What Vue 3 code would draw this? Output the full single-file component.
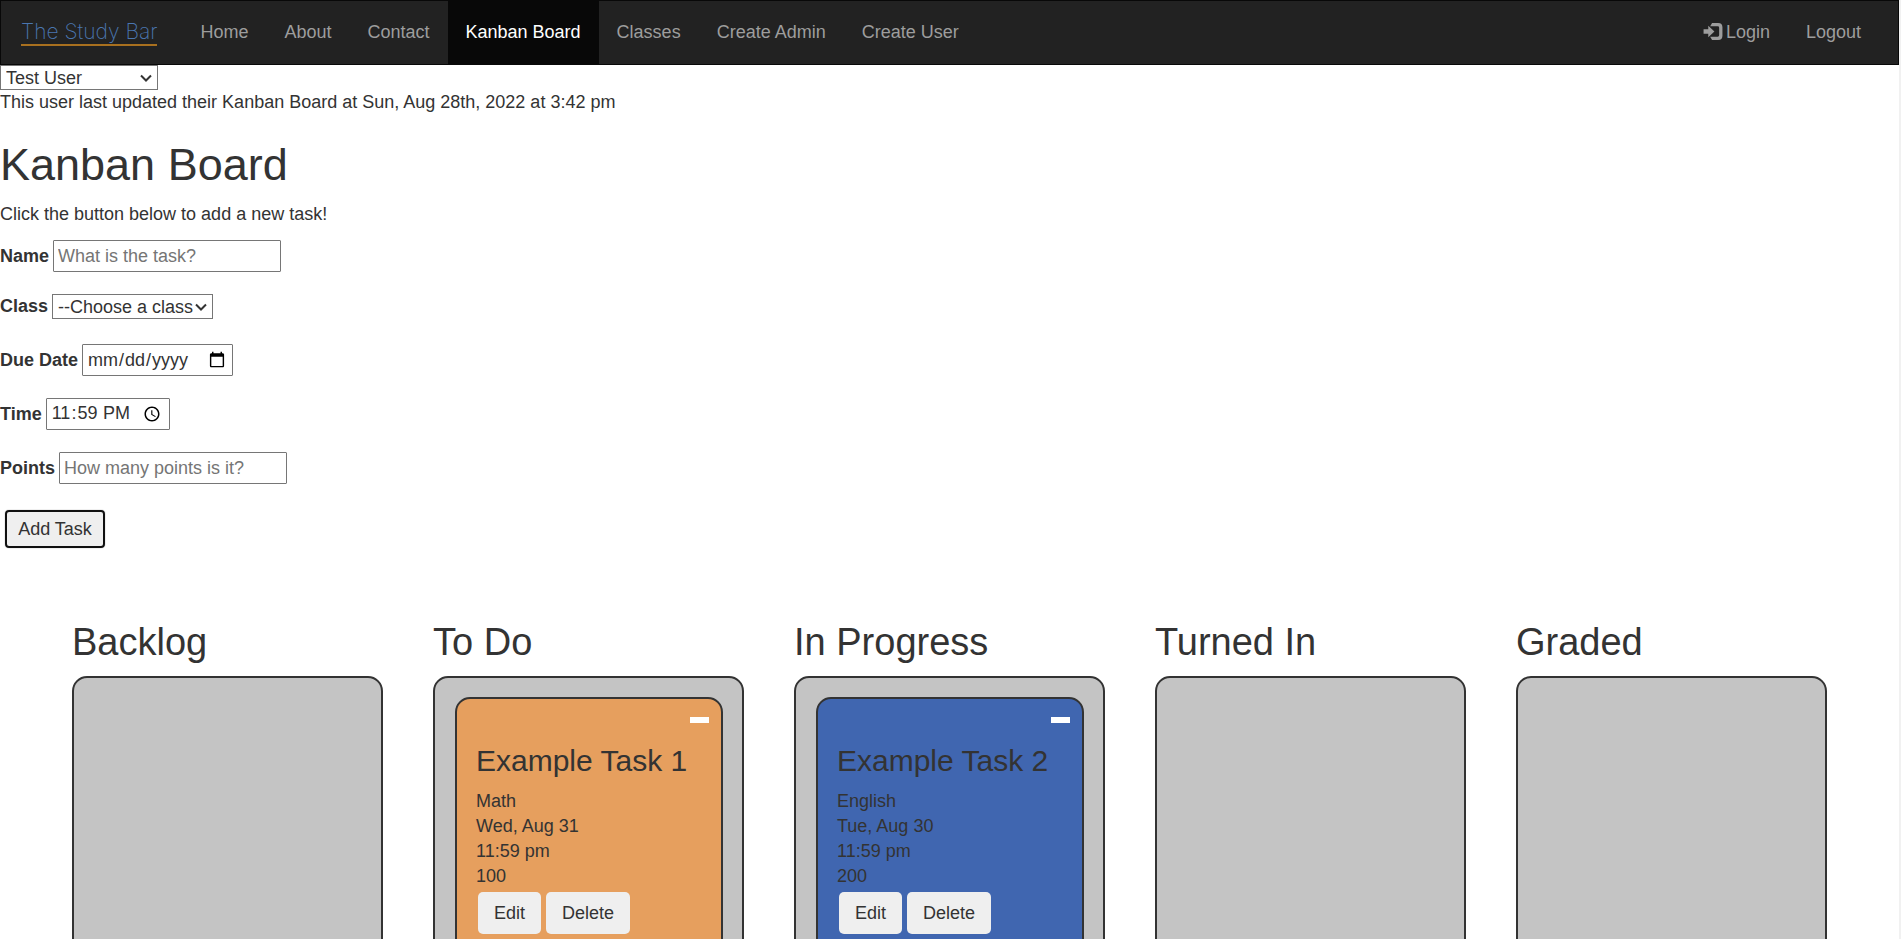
<script setup>
import { ref } from 'vue'

const links = ['Home', 'About', 'Contact', 'Kanban Board', 'Classes', 'Create Admin', 'Create User']
const active = ref('Kanban Board')
const user = ref('Test User')
const taskName = ref('')
const taskClass = ref('')
const dueDate = ref('')
const dueTime = ref('23:59')
const points = ref('')

const columns = [
  { title: 'Backlog', tasks: [] },
  { title: 'To Do', tasks: [{ name: 'Example Task 1', color: 'orange', details: ['Math', 'Wed, Aug 31', '11:59 pm', '100'] }] },
  { title: 'In Progress', tasks: [{ name: 'Example Task 2', color: 'blue', details: ['English', 'Tue, Aug 30', '11:59 pm', '200'] }] },
  { title: 'Turned In', tasks: [] },
  { title: 'Graded', tasks: [] },
]
</script>

<template>
  <div class="page">
    <nav class="navbar">
      <a class="brand" href="#"><span class="brand-name">The Study Bar</span></a>
      <ul class="links">
        <li v-for="link in links" :key="link">
          <a href="#" :class="{ active: link === active }" @click.prevent="active = link">{{ link }}</a>
        </li>
      </ul>
      <ul class="links account">
        <li>
          <a href="#">
            <svg class="login-icon" viewBox="0 0 20 18" aria-hidden="true">
              <path d="M0 6.500h5V3l6.500 6L5 15v-3.500H0z" />
              <path d="M9 0h6.500Q20 0 20 4.500v9Q20 18 15.500 18H9l-2-3.500h8q1.500 0 1.500-1.500V5q0-1.500-1.500-1.500H7z" />
            </svg>
            <span>Login</span>
          </a>
        </li>
        <li><a href="#">Logout</a></li>
      </ul>
    </nav>

    <main>
      <div class="select user-select">
        <select v-model="user" aria-label="User">
          <option>Test User</option>
        </select>
        <svg class="chevron" viewBox="0 0 12 8" aria-hidden="true"><path d="M1 1.500l5 5 5-5" /></svg>
      </div>
      <p class="updated">This user last updated their Kanban Board at Sun, Aug 28th, 2022 at 3:42 pm</p>
      <h1>Kanban Board</h1>
      <p class="intro">Click the button below to add a new task!</p>

      <form class="task-form" @submit.prevent>
        <div class="row">
          <label for="name">Name</label>
          <input id="name" v-model="taskName" class="text-box" type="text" placeholder="What is the task?">
        </div>
        <div class="row select-row">
          <label for="class">Class</label>
          <div class="select class-select">
            <select id="class" v-model="taskClass">
              <option value="">--Choose a class</option>
              <option>Math</option>
              <option>English</option>
            </select>
            <svg class="chevron" viewBox="0 0 12 8" aria-hidden="true"><path d="M1 1.500l5 5 5-5" /></svg>
          </div>
        </div>
        <div class="row">
          <label for="date">Due Date</label>
          <input id="date" v-model="dueDate" class="date-box" type="date">
        </div>
        <div class="row">
          <label for="time">Time</label>
          <input id="time" v-model="dueTime" class="time-box" type="time">
        </div>
        <div class="row">
          <label for="points">Points</label>
          <input id="points" v-model="points" class="text-box" type="text" placeholder="How many points is it?">
        </div>
        <button class="add" type="submit">Add Task</button>
      </form>

      <div class="board">
        <section v-for="column in columns" :key="column.title" class="column">
          <h2>{{ column.title }}</h2>
          <div class="lane">
            <article v-for="task in column.tasks" :key="task.name" class="card" :class="task.color">
              <button class="collapse" type="button" aria-label="Collapse task"></button>
              <h3>{{ task.name }}</h3>
              <p v-for="detail in task.details" :key="detail">{{ detail }}</p>
              <div class="actions">
                <button type="button">Edit</button>
                <button type="button">Delete</button>
              </div>
            </article>
          </div>
        </section>
      </div>
    </main>
  </div>
</template>

<style>
body {
  margin: 0;
}
</style>

<style scoped>
.page,
.page * {
  box-sizing: border-box;
}

.page {
  height: 100vh;
  overflow-y: auto;
  scrollbar-width: none;
  border-right: 2px solid #f1f1f1;
  background: #fff;
  color: #333;
  font-family: "Liberation Sans", Arial, sans-serif;
  font-size: 18px;
  line-height: 25px;
}

h1,
h2,
h3,
p,
ul {
  margin: 0;
  padding: 0;
  font-weight: 400;
}

input,
select,
button {
  margin: 0;
  font-family: inherit;
  font-size: inherit;
  color: inherit;
}

.navbar {
  display: flex;
  height: 65px;
  border: 1px solid #080808;
  background: #222;
}

.brand {
  display: flex;
  align-items: center;
  padding: 0 25px 0 20px;
  text-decoration: none;
}

.brand-name {
  border-bottom: 2px solid #a8701f;
  color: #4a76b0;
  font-family: Inter, "Liberation Sans", sans-serif;
  font-size: 21px;
  font-weight: 200;
  line-height: 25px;
}

.links {
  display: flex;
  list-style: none;
}

.links a {
  display: flex;
  align-items: center;
  height: 100%;
  padding: 0 18px;
  color: #9d9d9d;
  text-decoration: none;
}

.links a.active {
  background: #080808;
  color: #fff;
}

.account {
  margin-left: auto;
  padding-right: 19px;
}

.login-icon {
  width: 20px;
  height: 17px;
  margin-right: 3px;
  margin-bottom: 3px;
  fill: #9d9d9d;
}

.select {
  position: relative;
  height: 25px;
}

.select select {
  display: block;
  width: 100%;
  height: 100%;
  padding: 0 5px;
  border: 1px solid #767676;
  border-radius: 0;
  background: #fff;
  appearance: none;
}

.chevron {
  position: absolute;
  top: 9px;
  right: 6px;
  width: 12px;
  height: 8px;
  fill: none;
  stroke: #333;
  stroke-width: 2;
  pointer-events: none;
}

.user-select {
  width: 158px;
}

.class-select {
  width: 161px;
}

h1 {
  margin: 25px 0 12px;
  font-size: 45px;
  line-height: 50px;
}

.task-form {
  display: flex;
  flex-direction: column;
  align-items: flex-start;
  gap: 22px;
  margin-top: 13px;
}

.row {
  display: flex;
  align-items: center;
  gap: 4px;
}

.select-row {
  padding-bottom: 3px;
}

label {
  font-weight: 700;
}

.row input {
  height: 32px;
  padding: 1px 4px;
  border: 1px solid #767676;
  border-radius: 1px;
  background: #fff;
}

.row .text-box {
  width: 228px;
}

.row .date-box {
  width: 151px;
}

.row .time-box {
  width: 124px;
}

.text-box::placeholder {
  color: #757575;
}

.add {
  width: 100px;
  height: 38px;
  margin: 4px 0 0 5px;
  padding: 0;
  border: 2px solid #101010;
  border-radius: 4px;
  background: #efefef;
  box-shadow: 0 0 0 1px #efefef;
}

.board {
  display: grid;
  grid-template-columns: repeat(5, minmax(0, 1fr));
  gap: 50px;
  margin-top: 73px;
  padding: 0 72px 50px;
}

h2 {
  margin-bottom: 13px;
  font-size: 38px;
  line-height: 42px;
}

.lane {
  min-height: 625px;
  padding: 19px 19px 19px 20px;
  border: 2px solid #333;
  border-radius: 15px;
  background: #c4c4c4;
}

.card {
  display: flex;
  flex-direction: column;
  padding: 18px 12px 19px 19px;
  border: 2px solid #333;
  border-radius: 15px;
}

.orange {
  background: #e69f5e;
}

.blue {
  background: #4066b0;
}

.collapse {
  align-self: flex-end;
  width: 19px;
  height: 6px;
  padding: 0;
  border: 0;
  background: #fff;
}

h3 {
  margin: 21px 0 11px;
  font-size: 30px;
  line-height: 34px;
}

.actions {
  display: flex;
  gap: 5px;
  margin: 3px 0 0 2px;
}

.actions button {
  height: 42px;
  padding: 0 16px;
  border: 0;
  border-radius: 5px;
  background: #efefef;
}
</style>
